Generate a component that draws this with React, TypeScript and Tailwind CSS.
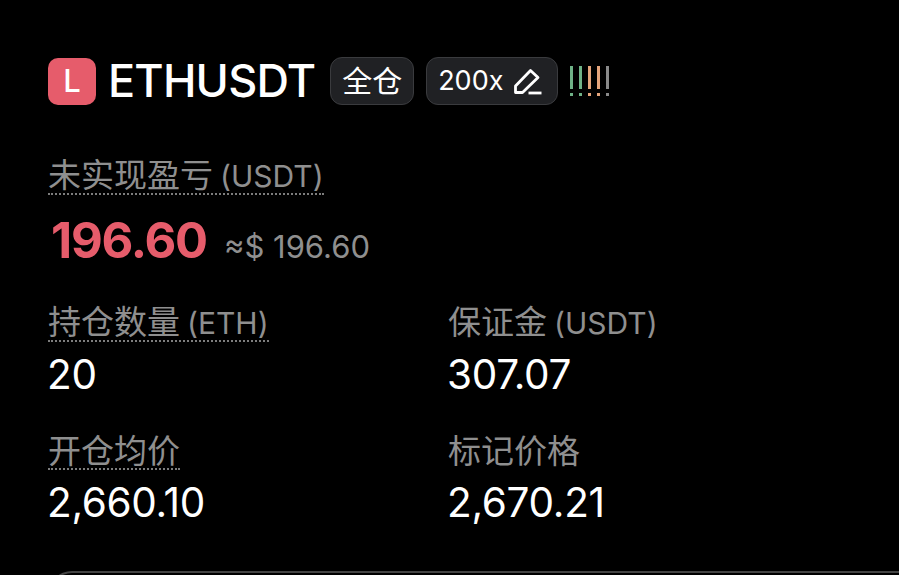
import React from 'react';

const font = { fontFamily: 'Inter, "Noto Sans CJK SC", sans-serif' };

const Stat = ({ label, unit, value, dotted }: { label: string; unit?: string; value: string; dotted?: boolean }) => (
  <div className="flex flex-col items-start">
    <span
      className={`border-b-2 border-dotted text-[33px] leading-[34px] text-[#8f8f8f] ${
        dotted ? 'border-[#7d7d7d]' : 'border-transparent'
      }`}
    >
      {label}
      {unit && <span className="ml-[7px] text-[30px]">{unit}</span>}
    </span>
    <span className="-ml-px mt-[9px] text-[40.5px] leading-[48px] tracking-[-0.3px] text-white">{value}</span>
  </div>
);

export default function App() {
  const bars = ['#6fb287', '#6fb287', '#e5a57c', '#e5a57c', '#8a8a8a'];
  return (
    <div className="h-[575px] w-[899px] overflow-hidden bg-black pl-12 pt-[57px]" style={font}>
      <div className="flex items-center">
        <div className="flex h-[47px] w-[48px] items-center justify-center rounded-[10px] bg-[#e65c6b] text-[31px] font-medium text-white">
          L
        </div>
        <span className="ml-3 text-[45px] font-medium leading-[46px] tracking-[-0.8px] text-white">ETHUSDT</span>
        <div className="ml-[15px] flex h-[48px] w-[84px] items-center justify-center rounded-xl border border-[#3a3b3e] bg-[#202124] text-[30px] text-white">
          全仓
        </div>
        <div className="ml-3 flex h-[48px] w-[132px] items-center justify-center gap-[9px] rounded-xl border border-[#3a3b3e] bg-[#202124] pr-[3px] text-[27px] text-white">
          200x
          <svg width="31" height="30" viewBox="0 0 30 30" fill="none" stroke="white" strokeWidth="2.8" strokeLinejoin="round">
            <path d="M3 26.5 L3 20 L18 4.5 L25.5 11.5 L10 26.5 Z" />
            <path d="M16 27 H29" />
          </svg>
        </div>
        <div className="ml-3 flex h-[30px] gap-[6px]">
          {bars.map((c, i) => (
            <div key={i} className="flex w-[3px] flex-col justify-between">
              <div className="h-[23px] w-[3px]" style={{ backgroundColor: c }} />
              <div className="h-[3px] w-[3px]" style={{ backgroundColor: c }} />
            </div>
          ))}
        </div>
      </div>

      <div className="mt-[53px] flex flex-col items-start">
        <span className="border-b-2 border-dotted border-[#7d7d7d] text-[33px] leading-[34px] text-[#8f8f8f]">
          未实现盈亏<span className="ml-[7px] text-[30px]">(USDT)</span>
        </span>
        <div className="mt-4 flex items-baseline pl-[3px]">
          <span className="text-[49px] font-bold leading-[60px] tracking-[-1.2px] text-[#e65c6b]">196.60</span>
          <span className="ml-[17px] text-[31px] text-[#8f8f8f]">≈$ 196.60</span>
        </div>
      </div>

      <div className="mt-[34px] grid grid-cols-[400px_1fr] gap-y-[35px]">
        <Stat label="持仓数量" unit="(ETH)" value="20" dotted />
        <Stat label="保证金" unit="(USDT)" value="307.07" />
        <Stat label="开仓均价" value="2,660.10" dotted />
        <Stat label="标记价格" value="2,670.21" />
      </div>

      <div className="mt-[44px] h-20 w-[900px] rounded-t-[24px] border-2 border-r-0 border-[#444444]" />
    </div>
  );
}
